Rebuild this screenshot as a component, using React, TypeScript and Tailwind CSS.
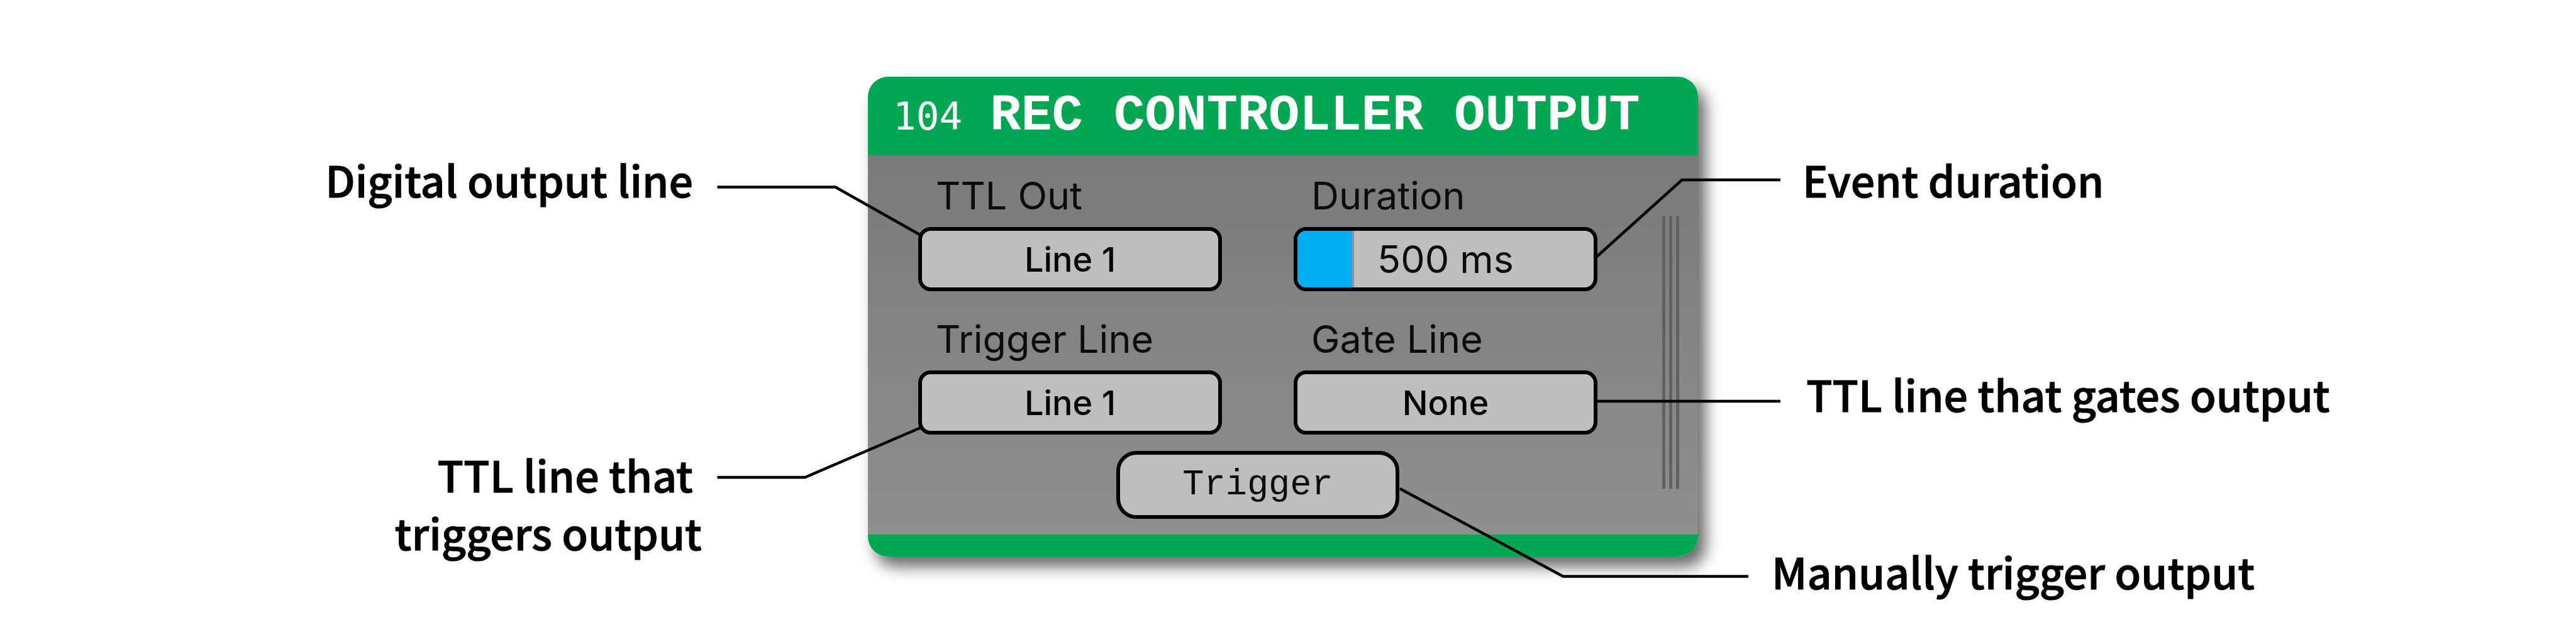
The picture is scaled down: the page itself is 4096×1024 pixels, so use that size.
import { useState } from "react";
import type { ReactNode } from "react";

const LINES = ["None", "Line 1", "Line 2", "Line 3", "Line 4", "Line 5", "Line 6", "Line 7", "Line 8"];
const MAX_DURATION = 5000;

function Field({ id, label, children }: { id: string; label: string; children: ReactNode }) {
  return (
    <div className="flex flex-col gap-[18px]">
      <label htmlFor={id} className="pl-7 text-[61px] leading-[64px] text-[#0c0c0c]">
        {label}
      </label>
      {children}
    </div>
  );
}

function LineSelect({ id, initial }: { id: string; initial: string }) {
  const [value, setValue] = useState(initial);
  return (
    <select
      id={id}
      value={value}
      onChange={(e) => setValue(e.target.value)}
      className="h-[102px] w-full appearance-none rounded-[20px] border-6 border-black bg-[#bebebe] text-center text-[54px] font-medium text-black [text-align-last:center]"
    >
      {LINES.map((line) => (
        <option key={line}>{line}</option>
      ))}
    </select>
  );
}

function DurationSlider({ id }: { id: string }) {
  const [duration, setDuration] = useState(500);
  const fill = Math.pow(duration / MAX_DURATION, 0.74) * 100;
  return (
    <div className="relative h-[102px] overflow-hidden rounded-[20px] border-6 border-black bg-[#bebebe]">
      <div className="flex h-full">
        <div className="bg-[#00adf1]" style={{ width: `${fill}%` }} />
        <div className="w-1 bg-[#8e8e8e]" />
      </div>
      <output
        htmlFor={id}
        className="absolute inset-0 flex items-center justify-center text-[61px] leading-none text-[#0c0c0c]"
      >
        {duration} ms
      </output>
      <input
        id={id}
        type="range"
        min={5}
        max={MAX_DURATION}
        value={duration}
        onChange={(e) => setDuration(Number(e.target.value))}
        className="absolute inset-0 h-full w-full opacity-0"
      />
    </div>
  );
}

function ModuleCard() {
  return (
    <section className="relative font-normal">
      <div className="overflow-hidden rounded-[32px] shadow-[12px_16px_24px_rgba(0,0,0,0.6)]">
        <header className="flex h-[125px] items-baseline gap-11 bg-[#02a653] pt-[15px] pl-10 whitespace-nowrap text-white">
          <span className="font-['DejaVu_Sans_Mono',monospace] text-[61px] leading-[96px]">104</span>
          <h1 className="font-['Liberation_Mono',monospace] text-[82px] leading-[96px] font-bold">
            REC CONTROLLER OUTPUT
          </h1>
        </header>
        <div className="flex h-[603px] bg-linear-to-b from-[#7a7a7a] to-[#8f8f8f] pl-20 font-['Inter',sans-serif]">
          <div className="flex w-[1080px] flex-col items-center pt-8">
            <div className="grid w-full grid-cols-2 gap-x-[114px] gap-y-[44px]">
              <Field id="ttl-out" label="TTL Out">
                <LineSelect id="ttl-out" initial="Line 1" />
              </Field>
              <Field id="duration" label="Duration">
                <DurationSlider id="duration" />
              </Field>
              <Field id="trigger-line" label="Trigger Line">
                <LineSelect id="trigger-line" initial="Line 1" />
              </Field>
              <Field id="gate-line" label="Gate Line">
                <LineSelect id="gate-line" initial="None" />
              </Field>
            </div>
            <button
              type="button"
              className="mt-[26px] h-[108px] w-[450px] rounded-[32px] border-6 border-black bg-[#bebebe] font-['Liberation_Mono',monospace] text-[57px] leading-none text-[#0c0c0c]"
            >
              Trigger
            </button>
          </div>
          <div className="mt-[97px] ml-[103px] flex h-[433px] gap-[6px]">
            <div className="w-[5px] bg-[#616161]" />
            <div className="w-[5px] bg-[#616161]" />
            <div className="w-[5px] bg-[#616161]" />
          </div>
        </div>
        <footer className="h-[35px] bg-[#02a653]" />
      </div>
      {/* Leader lines, in card coordinates; they run past the card on both sides. */}
      <svg
        className="pointer-events-none absolute top-0 left-0 overflow-visible"
        width="1320"
        height="763"
        viewBox="0 0 1320 763"
        fill="none"
        stroke="#000"
        strokeWidth="4.5"
        aria-hidden="true"
      >
        <path d="M-239.500 175.500H-51.500L84 252" />
        <path d="M-239.500 637H-100L84 558" />
        <path d="M1159 286L1294.500 164H1451" />
        <path d="M1158 516H1451" />
        <path d="M846 655L1105.500 794.500H1400" />
      </svg>
    </section>
  );
}

export default function App() {
  return (
    <main className="grid min-h-screen grid-cols-[1fr_1320px_1fr] bg-white pr-4 font-['Noto_Sans_CJK_JP',sans-serif] text-[68px] leading-[92px] font-medium whitespace-nowrap text-black">
      <div className="flex flex-col gap-[377px] pt-[239px] text-right [-webkit-text-stroke:1px_black]">
        <p className="pr-[278px]">Digital output line</p>
        <div>
          <p className="pr-[278px]">TTL line that</p>
          <p className="pr-[264px]">triggers output</p>
        </div>
      </div>
      <div className="pt-[122px]">
        <ModuleCard />
      </div>
      <div className="flex flex-col pt-[239px] [-webkit-text-stroke:1px_black]">
        <p className="pl-[166px]">Event duration</p>
        <p className="mt-[249px] pl-[172px]">TTL line that gates output</p>
        <p className="mt-[190px] pl-[117px]">Manually trigger output</p>
      </div>
    </main>
  );
}
